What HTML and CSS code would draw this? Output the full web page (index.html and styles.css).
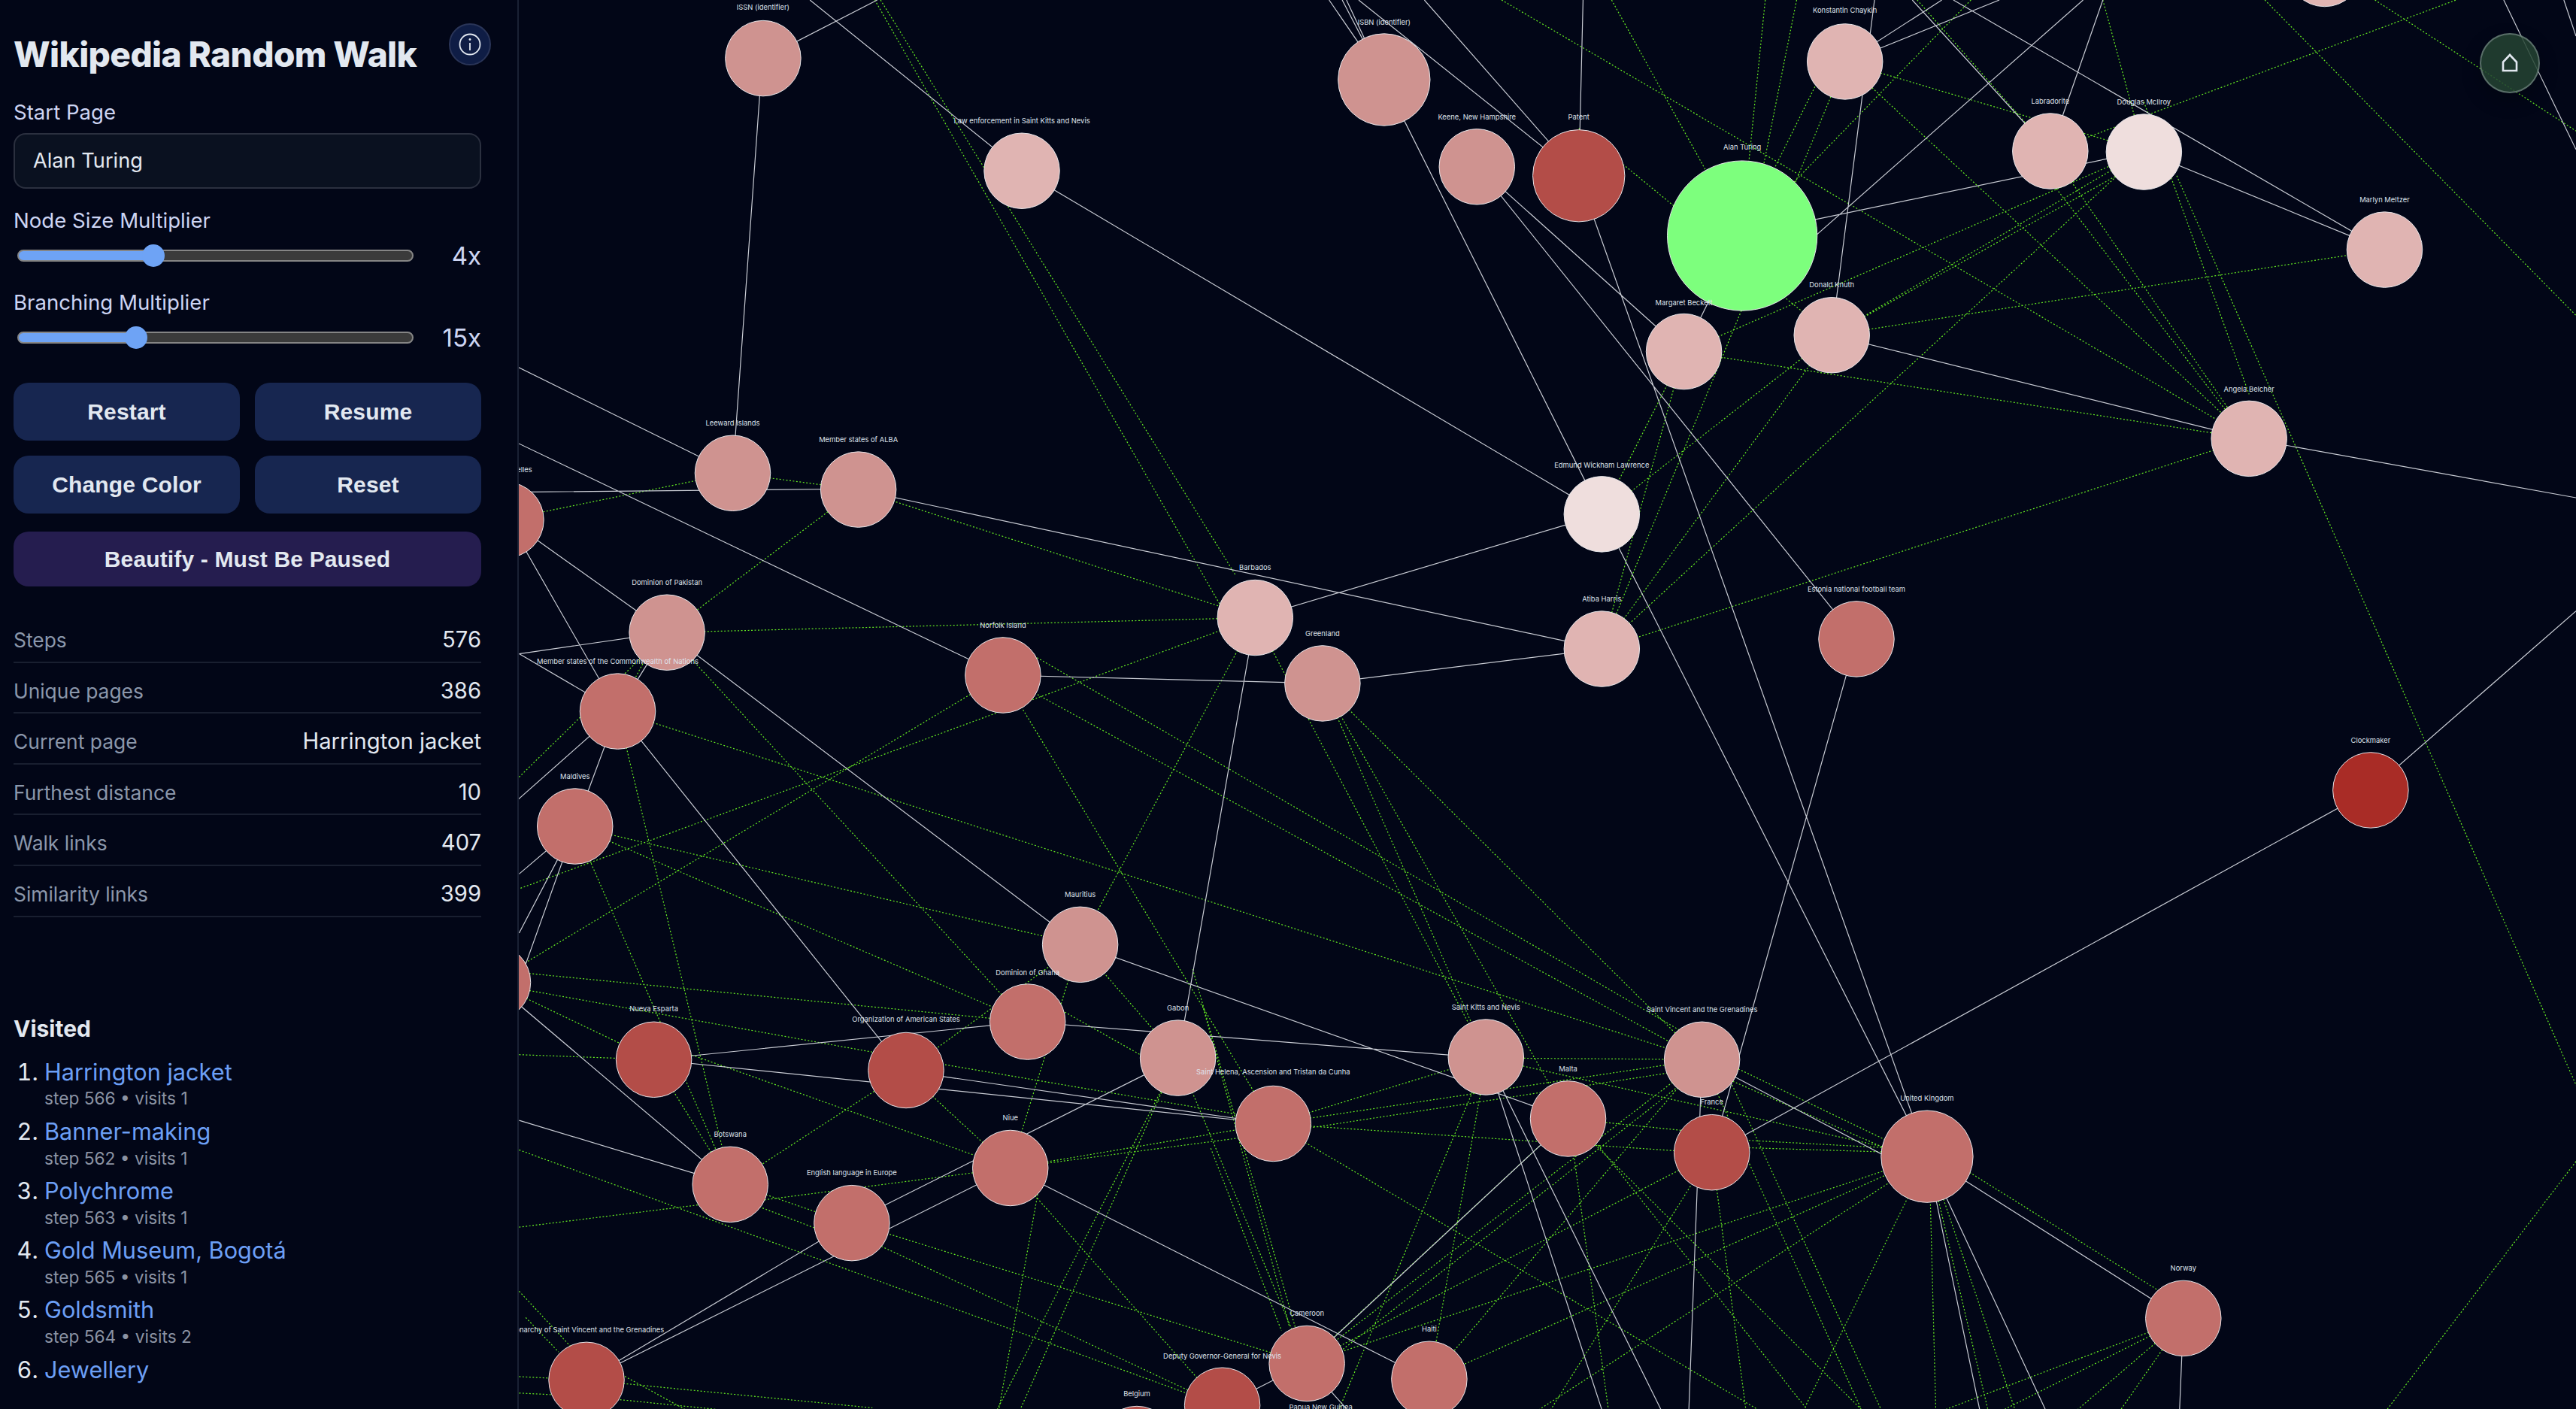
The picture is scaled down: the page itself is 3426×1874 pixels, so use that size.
FILE: index.html
```html
<!DOCTYPE html>
<html lang="en">
<head>
<meta charset="utf-8">
<title>Wikipedia Random Walk</title>
<link rel="stylesheet" href="styles.css">
</head>
<body>
<div class="app">
  <aside class="sidebar">
    <header class="head">
      <h1 class="title">Wikipedia Random Walk</h1>
      <button class="info" aria-label="About">
        <svg class="info-icon" viewBox="0 0 30 30"><circle cx="15" cy="15" r="13.5"/><path d="M15 13v10"/><circle class="dot" cx="15" cy="8.5" r="1.4"/></svg>
      </button>
    </header>

    <label class="label" for="start">Start Page</label>
    <input class="text-input" id="start" type="text" value="Alan Turing">

    <label class="label gap-a" for="size">Node Size Multiplier</label>
    <div class="slider-row">
      <input class="range" id="size" type="range" min="1" max="10" value="4" style="--fill:34.3%">
      <span class="slider-value">4x</span>
    </div>

    <label class="label gap-b" for="branch">Branching Multiplier</label>
    <div class="slider-row">
      <input class="range" id="branch" type="range" min="1" max="50" value="15" style="--fill:29.8%">
      <span class="slider-value">15x</span>
    </div>

    <div class="actions">
      <button class="btn">Restart</button>
      <button class="btn">Resume</button>
      <button class="btn">Change Color</button>
      <button class="btn">Reset</button>
      <button class="btn btn-wide">Beautify - Must Be Paused</button>
    </div>

    <dl class="stats">
      <div class="stat"><dt>Steps</dt><dd>576</dd></div>
      <div class="stat"><dt>Unique pages</dt><dd>386</dd></div>
      <div class="stat"><dt>Current page</dt><dd>Harrington jacket</dd></div>
      <div class="stat"><dt>Furthest distance</dt><dd>10</dd></div>
      <div class="stat"><dt>Walk links</dt><dd>407</dd></div>
      <div class="stat"><dt>Similarity links</dt><dd>399</dd></div>
    </dl>

    <h2 class="visited-title">Visited</h2>
    <ol class="visited">
      <li><a href="#">Harrington jacket</a><small>step 566 • visits 1</small></li>
      <li><a href="#">Banner-making</a><small>step 562 • visits 1</small></li>
      <li><a href="#">Polychrome</a><small>step 563 • visits 1</small></li>
      <li><a href="#">Gold Museum, Bogotá</a><small>step 565 • visits 1</small></li>
      <li><a href="#">Goldsmith</a><small>step 564 • visits 2</small></li>
      <li><a href="#">Jewellery</a></li>
    </ol>
  </aside>

  <main class="canvas">
    <svg class="graph" viewBox="315.8 0 1252.2 857.7" preserveAspectRatio="none">
      <path class="sim" d="M961 78L1060 159M914 0L1369 267M981 0L1060 143M1074.5 0L1060 143M1093.6 0L1065 143M1123 16L1060 143M1123 38L1085 130M1199.7 0L1085 118M1123 38L1305 92M1123 38L1369 267M1060 160L1115 204M1025 214L1305 92M1115 204L1305 92M1115 204L1290 106M1115 204L1451 152M1025 214L1369 267M1060 189L975 395M1025 214L975 395M1025 214L975 313M975 313L1115 204M975 395L1115 204M975 395L1305 92M1378.6 0L1568 192M1248 92L1495 0M1445.6 0L1568 79.7M1305 62L1369 240M1325 107L1570 665M1248 92L1369 267M1248 110L1355 250M1280 0L1305 92M1167 0L1248 92M1369 267L975 395"/>
      <path class="sim" d="M532.5 0L750 381M536 0L752 350M446 288L309 316M446 288L522 298M522 298L764 376M522 298L406 385M406 385L764 376M764 376L316 541M610 411L300 598M406 385L625 622M406 385L316 473M396 395L376 433M376 433L1036 645M376 433L445 721M350 503L445 721M350 503L657 575M350 503L625 622M300 598L398 645M300 599L551 644M316 592L625 622M316 642L398 645M398 634L615 711M398 645L445 721M551 652L445 721M551 652L615 711M551 644L775 682M551 652L657 575M625 603L717 655M657 575L615 711M717 644L607 858M707 665L621 858M657 575L717 644M764 376L657 575M764 376L905 644M805 416L905 644M805 416L955 681M805 416L1036 645M610 411L1036 645M610 388L1036 635M610 411L775 684M726 590L789 810M732 612L785 808M737 699L780 810M717 644L795 830"/>
      <path class="sim" d="M615 711L775 684M615 711L775 690M775 684L905 644M775 684L1036 645M775 690L1036 650M775 684L1042 702M775 684L1070 858M445 733L615 711M445 720L518 745M445 728L518 756M445 731L316 747M316 700L744 856M518 744L795 830M518 750L744 856M615 711L744 856M632 725L608 858M357 840L531 857M357 850L437 858M357 825L417 858M316 838L357 840M316 848L357 850M316 786L357 830M320 802L340 823M905 644L1036 645M905 644L1173 704M955 681L1042 690M1036 640L1150 695M1036 650L1150 700M1042 693L1173 700M1042 698L1173 702M1036 645L795 830M1036 650L800 835M1036 645L870 840M1036 645L1133 858M1045 640L1145 858M1042 702L795 830M1029 722L944 858M1045 724L1062.7 858M955 681L979 858M955 681L1133 858M960 681L1100 858M955 681L800 825M905 644L870 840M905 644L815 858M1175 731L1178.3 858M1180 731L1210 858M1183 730L1226.5 858M1185 705L1329 795M1173 704L795 830M1173 704L870 840M1173 705L937 858M1173 705L1098 858M1329 803L1100 890M1329 803L1220 858M1329 803L1264.7 858M1329 803L1291 858M1568 707L1453 858"/>
      <path class="walk" d="M464 36L534 0M493 0L622 104M622 104L975 313M464 36L446 288M315.8 223.7L446 288M315.8 270L610 411M320 299.5L522 297.6M522 298L975 395M610 411L805 416M805 416L975 395M764 376L975 313M764 376L717 644M316 398L406 385M316 398L376 433M309 316L406 385M309 316L376 433M406 385L376 433M376 433L350 503M376 433L315 487M350 503L316 532M350 503L316 568M350 503L316 598M376 433L551 652M406 385L657 575M657 575L955 681M625 622L905 644M398 645L625 622M398 645L775 684M551 652L775 684M717 644L518 744M518 744L357 840M615 711L357 840M615 711L870 840M316 682L445 721M300 598L445 721M955 681L795 830M795 830L744 856M795 830L820 858M905 644L975 858M905 644L1011 858M1036 645L1150 705M1130 389L1042 702M1036 645L1028 858M1042 702L1443 481M961 107L1173 704M975 313L1173 704M1173 704L1329 803M1173 704L1205 858M1173 704L1245 858M1329 803L1326.7 858M1443 481L1568 372M1369 267L1568 303M1115 204L1369 267M1060 143L1305 92M1305 92L1451 152M1189 0L1451 152M1164 0L1248 92M1280 0L1248 92M1100 148L1268 0M1123 38L1182 0M1123 38L1217 0M1141 0L1115 204M963.6 0L961 107M1060 143L1025 214M809 0L842 48M817 0L842 48M819.6 0L842 48M827 0L961 107M867 0L961 107M842 48L975 313M899 101L1025 214M899 101L1130 389M1524 0L1568 91M1560.6 0L1568 22"/>

      <circle class="n-a" cx="1415" cy="-19" r="23"/>
      <circle class="n-b" cx="464.5" cy="35.5" r="23"/>
      <circle class="n-b" cx="842.5" cy="48.5" r="28"/>
      <circle class="n-a" cx="622" cy="104" r="23"/>
      <circle class="n-b" cx="899" cy="101.5" r="23"/>
      <circle class="n-d" cx="961" cy="107" r="28"/>
      <circle class="n-home" cx="1060.5" cy="143.5" r="45.6"/>
      <circle class="n-a" cx="1123" cy="37.5" r="23"/>
      <circle class="n-a" cx="1248" cy="92" r="23"/>
      <circle class="n-e" cx="1305" cy="92.5" r="23"/>
      <circle class="n-a" cx="1451.5" cy="152" r="23"/>
      <circle class="n-a" cx="1025" cy="214" r="23"/>
      <circle class="n-a" cx="1115" cy="204" r="23"/>
      <circle class="n-a" cx="1369" cy="267" r="23"/>
      <circle class="n-e" cx="975" cy="313" r="23"/>
      <circle class="n-b" cx="446" cy="288" r="23"/>
      <circle class="n-b" cx="522.5" cy="298" r="23"/>
      <circle class="n-c" cx="308" cy="316.5" r="23"/>
      <circle class="n-b" cx="406" cy="385" r="23"/>
      <circle class="n-a" cx="764" cy="376" r="23"/>
      <circle class="n-b" cx="805" cy="416" r="23"/>
      <circle class="n-c" cx="610.5" cy="411" r="23"/>
      <circle class="n-c" cx="376" cy="433" r="23"/>
      <circle class="n-a" cx="975" cy="395" r="23"/>
      <circle class="n-c" cx="1130" cy="389" r="23"/>
      <circle class="n-f" cx="1443" cy="481" r="23"/>
      <circle class="n-c" cx="350" cy="503" r="23"/>
      <circle class="n-b" cx="657.5" cy="575" r="23"/>
      <circle class="n-c" cx="300" cy="598" r="23"/>
      <circle class="n-c" cx="625.5" cy="622" r="23"/>
      <circle class="n-b" cx="717" cy="644" r="23"/>
      <circle class="n-d" cx="398" cy="645" r="23"/>
      <circle class="n-d" cx="551.5" cy="651.5" r="23"/>
      <circle class="n-b" cx="904.5" cy="643.5" r="23"/>
      <circle class="n-b" cx="1036" cy="645" r="23"/>
      <circle class="n-c" cx="775" cy="684" r="23"/>
      <circle class="n-c" cx="954.5" cy="681" r="23"/>
      <circle class="n-d" cx="1042" cy="701.5" r="23"/>
      <circle class="n-c" cx="1173" cy="704" r="28"/>
      <circle class="n-c" cx="444.5" cy="721" r="23"/>
      <circle class="n-c" cx="615" cy="711" r="23"/>
      <circle class="n-c" cx="518.5" cy="744.5" r="23"/>
      <circle class="n-c" cx="1329" cy="802.5" r="23"/>
      <circle class="n-d" cx="357" cy="840" r="23"/>
      <circle class="n-c" cx="795.5" cy="830" r="23"/>
      <circle class="n-d" cx="744" cy="855.5" r="23"/>
      <circle class="n-c" cx="870" cy="839.5" r="23"/>
      <circle class="n-d" cx="692" cy="879" r="23"/>
      <circle class="n-c" cx="804" cy="889" r="23"/>

      <g class="labels">
        <text x="464.5" y="6">ISSN (identifier)</text>
        <text x="842.5" y="15">ISBN (identifier)</text>
        <text x="622" y="75">Law enforcement in Saint Kitts and Nevis</text>
        <text x="899" y="73">Keene, New Hampshire</text>
        <text x="961" y="73">Patent</text>
        <text x="1060.5" y="91">Alan Turing</text>
        <text x="1123" y="8">Konstantin Chaykin</text>
        <text x="1248" y="63">Labradorite</text>
        <text x="1305" y="63.5">Douglas McIlroy</text>
        <text x="1451.5" y="123">Marlyn Meltzer</text>
        <text x="1025" y="186">Margaret Beckett</text>
        <text x="1115" y="175">Donald Knuth</text>
        <text x="1369" y="238.5">Angela Belcher</text>
        <text x="975" y="284.5">Edmund Wickham Lawrence</text>
        <text x="446" y="259">Leeward Islands</text>
        <text x="522.5" y="269">Member states of ALBA</text>
        <text x="313" y="287.5">Seychelles</text>
        <text x="406" y="356">Dominion of Pakistan</text>
        <text x="764" y="347">Barbados</text>
        <text x="805" y="387">Greenland</text>
        <text x="610.5" y="382">Norfolk Island</text>
        <text x="376" y="404">Member states of the Commonwealth of Nations</text>
        <text x="975" y="366">Atiba Harris</text>
        <text x="1130" y="360">Estonia national football team</text>
        <text x="1443" y="452">Clockmaker</text>
        <text x="350" y="474">Maldives</text>
        <text x="657.5" y="546">Mauritius</text>
        <text x="625.5" y="593.5">Dominion of Ghana</text>
        <text x="717" y="615">Gabon</text>
        <text x="398" y="615.5">Nueva Esparta</text>
        <text x="551.5" y="622">Organization of American States</text>
        <text x="904.5" y="614.5">Saint Kitts and Nevis</text>
        <text x="1036" y="616">Saint Vincent and the Grenadines</text>
        <text x="775" y="654">Saint Helena, Ascension and Tristan da Cunha</text>
        <text x="954.5" y="652">Malta</text>
        <text x="1042" y="672.5">France</text>
        <text x="1173" y="670">United Kingdom</text>
        <text x="444.5" y="692">Botswana</text>
        <text x="615" y="682">Niue</text>
        <text x="518.5" y="715.5">English language in Europe</text>
        <text x="1329" y="773.5">Norway</text>
        <text x="357" y="811">Monarchy of Saint Vincent and the Grenadines</text>
        <text x="795.5" y="801">Cameroon</text>
        <text x="744" y="827">Deputy Governor-General for Nevis</text>
        <text x="870" y="810.5">Haiti</text>
        <text x="692" y="850">Belgium</text>
        <text x="804" y="858">Papua New Guinea</text>
      </g>
    </svg>
    <button class="home" aria-label="Home">
      <svg class="home-icon" viewBox="0 0 24 26"><path d="M12 2L21 11.5V23H3V11.5Z"/></svg>
    </button>
  </main>
</div>
</body>
</html>
```
FILE: styles.css
```css
* { box-sizing: border-box; }
html, body { margin: 0; height: 100%; background: #020617; }
body { font-family: Inter, "Noto Sans", sans-serif; color: #e2e8f0; overflow: hidden; }

.app { display: flex; height: 100vh; }

.sidebar {
  width: 690px;
  flex: none;
  display: flex;
  flex-direction: column;
  padding: 31px 48px 29px 18px;
  border-right: 2px solid #1a2134;
  background: #020617;
  overflow: hidden;
}

.head { display: flex; justify-content: space-between; align-items: flex-start; margin-right: -13px; height: 101px; }
.title { margin: 12px 0 0; font-size: 46px; line-height: 58px; font-weight: 800; letter-spacing: -0.6px; color: #e2e8f0; white-space: nowrap; }
.info { width: 56px; height: 56px; padding: 0; flex: none; display: flex; align-items: center; justify-content: center; border-radius: 50%; border: 2px solid #2a3558; background: #0f1d45; }
.info-icon { width: 30px; height: 30px; fill: none; stroke: #e2e8f0; stroke-width: 1.8; }
.info-icon .dot { fill: #e2e8f0; stroke: none; }

.label { display: block; font-size: 27.6px; line-height: 34px; color: #cdd5f3; }
.gap-a { margin-top: 25px; }
.gap-b { margin-top: 28px; }

.text-input { display: block; width: 100%; height: 74px; margin-top: 11px; padding: 0 24px 2px; border: 2px solid #2b303f; border-radius: 16px; background: #0a1120; color: #e2e8f0; font: 27.2px Inter, sans-serif; outline: none; }

.slider-row { display: flex; align-items: center; justify-content: space-between; height: 34px; margin-top: 13px; padding-left: 5px; }
.slider-value { font-size: 33px; line-height: 34px; color: #cdd5f3; }

.range { -webkit-appearance: none; appearance: none; display: block; width: 527px; height: 30px; margin: 0; background: none; }
.range::-webkit-slider-runnable-track { height: 16px; border: 2px solid #858585; border-radius: 8px; background: linear-gradient(to right, #6ea3f5 var(--fill), #3b3b3b var(--fill)); }
.range::-webkit-slider-thumb { -webkit-appearance: none; width: 30px; height: 30px; margin-top: -9px; border: 0; border-radius: 50%; background: #6ea3f5; }

.actions { display: grid; grid-template-columns: 1fr 1fr; grid-auto-rows: 77px; gap: 20px; margin-top: 43px; }
.btn { border: 0; border-radius: 20px; background: #172650; color: #e2e8f0; font: bold 30px "Liberation Sans", Arial, sans-serif; letter-spacing: 0.15px; }
.btn-wide { grid-column: 1 / 3; margin-top: 4px; background: #251d4f; }

.stats { margin: 34px 0 0; }
.stat { display: flex; justify-content: space-between; align-items: baseline; height: 67.6px; padding-top: 20px; border-bottom: 2px solid #191f30; line-height: 33.6px; font-size: 26.4px; }
.stat dt { color: #8b97ab; }
.stat dd { margin: 0; font-size: 29.2px; color: #e2e8f0; }

.visited-title { margin: 130px 0 0; font-size: 30px; line-height: 36px; font-weight: 700; color: #e2e8f0; }
.visited { flex: 1; min-height: 0; margin: 21px 0 0; padding: 0 0 0 41px; overflow: hidden; font-size: 30.7px; line-height: 38.4px; }
.visited li { margin-bottom: 9.6px; }
.visited li::marker { color: #e2e8f0; }
.visited a { display: block; color: #6c9ff5; text-decoration: none; }
.visited small { display: block; margin-top: 2.4px; font-size: 22.7px; line-height: 28.8px; color: #8b93a3; }

.canvas { position: relative; flex: 1; min-width: 0; overflow: hidden; background: #020617; }
.graph { display: block; width: 100%; height: 100%; }

.walk { fill: none; stroke: #c9ccd4; stroke-width: 0.55; }
.sim { fill: none; stroke: #66ee22; stroke-width: 0.55; stroke-dasharray: 0.9 1.15; }

circle[class^="n-"] { stroke: #e6e6ea; stroke-width: 0.45; }
.n-a { fill: #e0b4b2; }
.n-b { fill: #cf9390; }
.n-c { fill: #c26f6b; }
.n-d { fill: #b34d48; }
.n-e { fill: #efdedd; }
.n-f { fill: #a92c26; }
.n-home { fill: #7dff7d; }

.labels text { font-family: Inter, sans-serif; font-size: 4.3px; fill: #dfe3ec; text-anchor: middle; }

.home { position: absolute; top: 44px; right: 48px; width: 80px; height: 80px; padding: 0; display: flex; align-items: center; justify-content: center; border-radius: 50%; border: 2px solid rgba(226, 232, 240, 0.3); background: rgba(36, 68, 50, 0.85); box-shadow: 0 10px 24px rgba(0, 0, 0, 0.25); }
.home-icon { width: 24px; height: 26px; fill: none; stroke: #e2e8f0; stroke-width: 2.6; }
```
